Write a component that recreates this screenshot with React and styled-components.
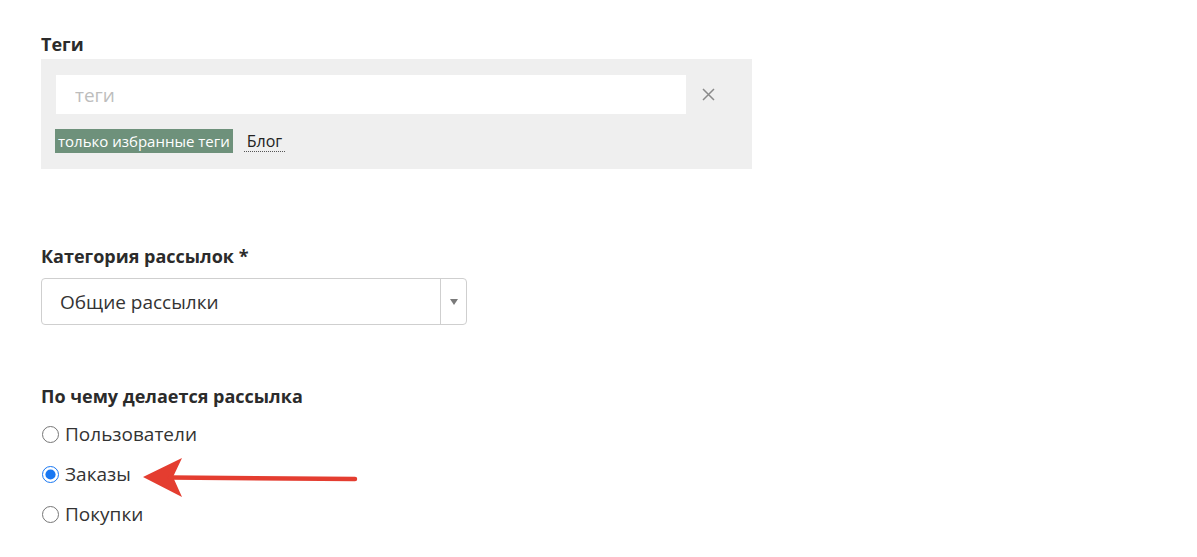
import React from 'react'
import styled, { createGlobalStyle } from 'styled-components'

const GlobalStyle = createGlobalStyle`
body {
  margin: 0;
  background: #fff;
  font-family: "Open Sans", "Liberation Sans", sans-serif;
  color: #333;
}
`;

const Page = styled.div`
position: relative;
padding: 30px 41px 20px;
width: 1197px;
height: 557px;
box-sizing: border-box;
`;

const Field = styled.div`
margin-bottom: ${({ gap }) => gap || 0}px;
`;

const Label = styled.div`
font-size: 18px;
font-weight: 700;
line-height: 28px;
color: #2b2b2b;
margin-bottom: ${({ mb }) => mb || 0}px;
`;

const TagsBox = styled.div`
width: 711px;
height: 110px;
box-sizing: border-box;
background: #efefef;
padding: 16px 15px 16px 15px;
display: flex;
flex-direction: column;
gap: 15px;
`;

const InputRow = styled.div`
display: flex;
align-items: center;
gap: 10px;
`;

const TagInput = styled.input`
width: 630px;
height: 39px;
box-sizing: border-box;
border: none;
outline: none;
background: #fff;
padding: 0 19px;
font-family: inherit;
font-size: 19px;
color: #333;
&::placeholder { color: #bdbdbd; }
`;

const ClearBtn = styled.button`
border: none;
background: none;
padding: 0 6px;
color: #8a8a8a;
display: flex;
cursor: pointer;
`;

const TagRow = styled.div`
display: flex;
align-items: center;
gap: 11px;
margin-left: -1px;
`;

const Chip = styled.span`
background: #6e917b;
color: #fff;
font-size: 15px;
height: 24px;
line-height: 24px;
padding: 0 3px;
white-space: nowrap;
`;

const TagLink = styled.span`
font-size: 16px;
color: #222;
line-height: 20px;
border-bottom: 1px dotted #555;
padding: 0 3px;
`;

const Select = styled.div`
width: 426px;
height: 47px;
box-sizing: border-box;
border: 1px solid #cfcfcf;
border-radius: 4px;
display: flex;
align-items: stretch;
`;

const SelectValue = styled.div`
flex: 1;
display: flex;
align-items: center;
padding-left: 18px;
font-size: 19px;
color: #333;
`;

const SelectArrow = styled.div`
width: 25px;
border-left: 1px solid #cfcfcf;
display: flex;
align-items: center;
justify-content: center;
&::after {
  content: '';
  border-left: 4px solid transparent;
  border-right: 4px solid transparent;
  border-top: 6px solid #7a7a7a;
}
`;

const RadioList = styled.div`
display: flex;
flex-direction: column;
gap: 14px;
margin-top: 11px;
`;

const RadioItem = styled.label`
display: flex;
align-items: center;
gap: 6px;
font-size: 19px;
line-height: 26px;
color: #333;
`;

const Radio = styled.input`
width: 17px;
height: 17px;
margin: 0 0 0 1px;
accent-color: #1877f2;
`;

const Arrow = styled.svg`
position: absolute;
left: 140px;
top: 455px;
`;

const options = ['Пользователи', 'Заказы', 'Покупки'];

export default function App() {
  return (
    <Page>
      <GlobalStyle />
      <Field gap={73}>
        <Label mb={1}>Теги</Label>
        <TagsBox>
          <InputRow>
            <TagInput placeholder="теги" />
            <ClearBtn>
              <svg width="13" height="13" viewBox="0 0 13 13">
                <path d="M1 1L12 12M12 1L1 12" stroke="currentColor" strokeWidth="1.5" />
              </svg>
            </ClearBtn>
          </InputRow>
          <TagRow>
            <Chip>только избранные теги</Chip>
            <TagLink>Блог</TagLink>
          </TagRow>
        </TagsBox>
      </Field>
      <Field gap={57}>
        <Label mb={8}>Категория рассылок *</Label>
        <Select>
          <SelectValue>Общие рассылки</SelectValue>
          <SelectArrow />
        </Select>
      </Field>
      <Field>
        <Label>По чему делается рассылка</Label>
        <RadioList>
          {options.map((o) => (
            <RadioItem key={o}>
              <Radio type="radio" name="by" defaultChecked={o === 'Заказы'} />
              {o}
            </RadioItem>
          ))}
        </RadioList>
      </Field>
      <Arrow width="222" height="46" viewBox="0 0 222 46">
        <path d="M3 22 L42 3 L33 22 L42 42 Z" fill="#e43d30" />
        <path d="M30 22.5 L215 24" stroke="#e43d30" strokeWidth="4.5" strokeLinecap="round" />
      </Arrow>
    </Page>
  )
}
